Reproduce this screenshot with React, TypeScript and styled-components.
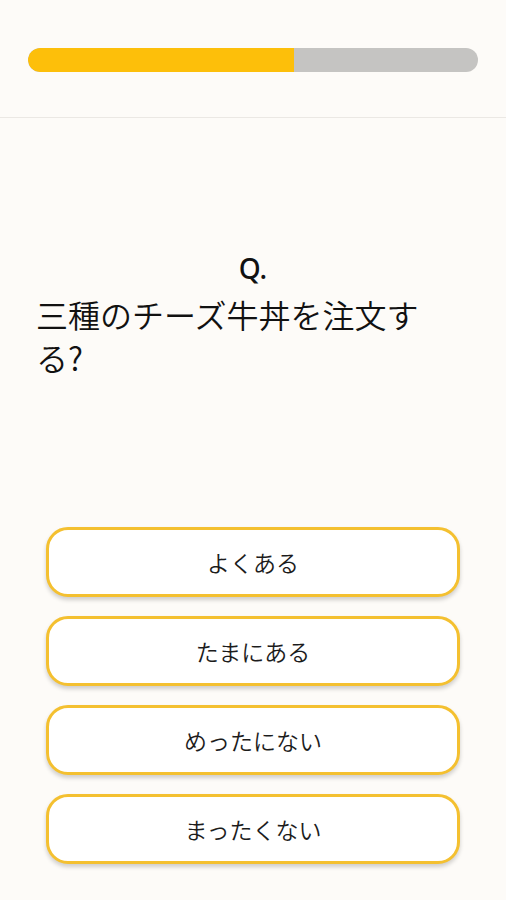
import React, {FunctionComponent} from "react";
import styled, {createGlobalStyle} from 'styled-components';

const CHOICES = ['よくある', 'たまにある', 'めったにない', 'まったくない'];

const App:FunctionComponent = () => {
	const progress = 59.2;

	return (
		<Page>
			<GlobalStyle/>
			<Header>
				<ProgressTrack>
					<ProgressFill style={{width: `${progress}%`}}/>
				</ProgressTrack>
			</Header>
			<Main>
				<QuestionBlock>
					<QLabel>Q.</QLabel>
					<QuestionText>三種のチーズ牛丼を注文する?</QuestionText>
				</QuestionBlock>
				<Choices>
					{CHOICES.map((c) => (
						<ChoiceButton key={c}>{c}</ChoiceButton>
					))}
				</Choices>
			</Main>
		</Page>
	)
}

// STYLED COMPONENTS //
const GlobalStyle = createGlobalStyle`
	html, body {
		margin: 0;
		padding: 0;
		background: #fdfbf8;
	}
	* { box-sizing: border-box; }
`;
const Page = styled.div`
	width: 506px;
	height: 900px;
	background: #fdfbf8;
	font-family: "Noto Sans", "Noto Sans CJK JP", sans-serif;
	color: #222;
	overflow: hidden;
`;
const Header = styled.header`
	height: 118px;
	padding: 48px 28px 0;
	border-bottom: 1px solid #ebe8e4;
`;
const ProgressTrack = styled.div`
	width: 450px;
	height: 24px;
	border-radius: 12px;
	background: #c5c4c2;
	overflow: hidden;
`;
const ProgressFill = styled.div`
	height: 100%;
	background: #fdbf0a;
	border-radius: 12px 0 0 12px;
`;
const Main = styled.main`
	display: flex;
	flex-direction: column;
	align-items: center;
	padding-top: 130px;
`;
const QuestionBlock = styled.div`
	width: 434px;
	display: flex;
	flex-direction: column;
`;
const QLabel = styled.div`
	text-align: center;
	font-family: "Noto Sans", sans-serif;
	font-size: 28px;
	font-weight: 500;
	line-height: 40px;
	color: #111;
`;
const QuestionText = styled.p`
	margin: 5px 0 0;
	width: 405px;
	font-family: "Noto Sans CJK JP", sans-serif;
	font-size: 32px;
	font-weight: 350;
	line-height: 43px;
	color: #111;
`;
const Choices = styled.div`
	margin-top: 148px;
	display: flex;
	flex-direction: column;
	gap: 19px;
`;
const ChoiceButton = styled.button`
	width: 414px;
	height: 70px;
	border: 3px solid #f4c030;
	border-radius: 22px;
	background: #fff;
	box-shadow: 0 3px 4px rgba(0, 0, 0, 0.18);
	font-family: "Noto Sans CJK JP", sans-serif;
	font-size: 23px;
	font-weight: 350;
	color: #1c1c1c;
	cursor: pointer;
	padding: 0;
`;

export default App;
